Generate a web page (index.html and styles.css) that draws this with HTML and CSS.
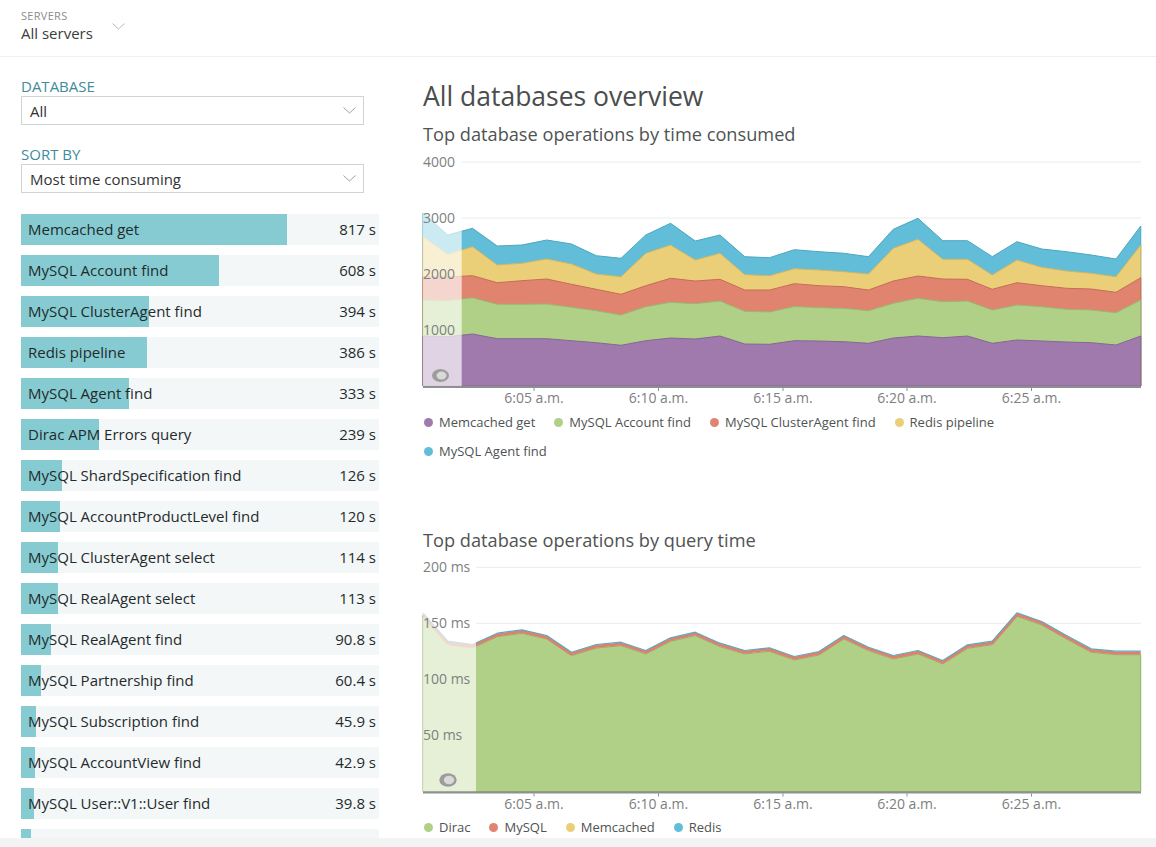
FILE: index.html
```html
<!DOCTYPE html>
<html lang="en">
<head>
<meta charset="utf-8">
<title>All databases overview</title>
<link rel="stylesheet" href="styles.css">
</head>
<body>
<div class="page">
  <header class="header">
    <div class="server-picker">
      <div class="picker-text">
        <div class="picker-label">SERVERS</div>
        <div class="picker-value">All servers</div>
      </div>
      <svg class="picker-chevron" width="13" height="7" viewBox="0 0 13 7"><path d="M0.5 0.5 L6.5 6 L12.5 0.5" fill="none" stroke="#b8bcbc" stroke-width="1"/></svg>
    </div>
  </header>

  <main class="main">
    <aside class="sidebar">
      <div class="field-label">DATABASE</div>
      <div class="select">
        <span>All</span>
        <svg width="13" height="7" viewBox="0 0 13 7"><path d="M0.5 0.5 L6.5 6 L12.5 0.5" fill="none" stroke="#9aa0a0" stroke-width="1"/></svg>
      </div>
      <div class="field-label">SORT BY</div>
      <div class="select">
        <span>Most time consuming</span>
        <svg width="13" height="7" viewBox="0 0 13 7"><path d="M0.5 0.5 L6.5 6 L12.5 0.5" fill="none" stroke="#9aa0a0" stroke-width="1"/></svg>
      </div>

      <ul class="ops">
        <li class="op" style="--w:266px"><span>Memcached get</span><span>817 s</span></li>
        <li class="op" style="--w:198px"><span>MySQL Account find</span><span>608 s</span></li>
        <li class="op" style="--w:128px"><span>MySQL ClusterAgent find</span><span>394 s</span></li>
        <li class="op" style="--w:126px"><span>Redis pipeline</span><span>386 s</span></li>
        <li class="op" style="--w:108px"><span>MySQL Agent find</span><span>333 s</span></li>
        <li class="op" style="--w:78px"><span>Dirac APM Errors query</span><span>239 s</span></li>
        <li class="op" style="--w:41px"><span>MySQL ShardSpecification find</span><span>126 s</span></li>
        <li class="op" style="--w:39px"><span>MySQL AccountProductLevel find</span><span>120 s</span></li>
        <li class="op" style="--w:37px"><span>MySQL ClusterAgent select</span><span>114 s</span></li>
        <li class="op" style="--w:37px"><span>MySQL RealAgent select</span><span>113 s</span></li>
        <li class="op" style="--w:30px"><span>MySQL RealAgent find</span><span>90.8 s</span></li>
        <li class="op" style="--w:20px"><span>MySQL Partnership find</span><span>60.4 s</span></li>
        <li class="op" style="--w:15px"><span>MySQL Subscription find</span><span>45.9 s</span></li>
        <li class="op" style="--w:14px"><span>MySQL AccountView find</span><span>42.9 s</span></li>
        <li class="op" style="--w:13px"><span>MySQL User::V1::User find</span><span>39.8 s</span></li>
        <li class="op" style="--w:10px"></li>
      </ul>
    </aside>

    <section class="content">
      <h1 class="title">All databases overview</h1>
      <h2 class="subtitle">Top database operations by time consumed</h2>
      <svg class="chart" width="718" height="262" viewBox="0 0 718 262">
        <g transform="translate(-423,-146)">
          <line class="grid" x1="462" y1="162" x2="1141" y2="162"/>
          <line class="grid" x1="462" y1="218" x2="1141" y2="218"/>
          <line class="grid" x1="462" y1="274" x2="1141" y2="274"/>
          <line class="grid" x1="462" y1="330" x2="1141" y2="330"/>
          <polygon class="a-blue" points="423,213 447.75,235 472.5,228.3 497.25,246 522,245 546.75,240 571.5,244 596.25,255.7 621,258.3 645.75,235 670.5,223.3 695.25,241 720,235 744.75,256.7 769.5,257.7 794.25,249.7 819,251.7 843.75,253.3 868.5,256.7 893.25,229.3 918,218.3 942.75,240.7 967.5,240.7 992.25,256.7 1017,241.7 1041.75,249 1066.5,251.7 1091.25,255 1116,259 1140.75,226 1140.75,386 423,386"/>
          <polygon class="a-yellow" points="423,236.7 447.75,254.3 472.5,246.7 497.25,265 522,263.3 546.75,259 571.5,264 596.25,274 621,276.7 645.75,253.3 670.5,245 695.25,260 720,253.3 744.75,274.7 769.5,275.7 794.25,268.7 819,270 843.75,271.7 868.5,274 893.25,248.3 918,239.3 942.75,259.3 967.5,259.3 992.25,275 1017,260 1041.75,267.3 1066.5,271 1091.25,273.3 1116,276.7 1140.75,245 1140.75,386 423,386"/>
          <polygon class="a-red" points="423,276.7 447.75,277 472.5,275.7 497.25,282.7 522,280.7 546.75,279 571.5,284.3 596.25,289.3 621,294.3 645.75,285.7 670.5,278.3 695.25,281 720,279.3 744.75,290 769.5,290 794.25,283.7 819,285.7 843.75,286.7 868.5,290 893.25,281 918,276 942.75,279 967.5,279.3 992.25,289.3 1017,282.7 1041.75,285.7 1066.5,288.3 1091.25,289 1116,292.3 1140.75,277.7 1140.75,386 423,386"/>
          <polygon class="a-green" points="423,300 447.75,300.7 472.5,297.7 497.25,304.3 522,304.3 546.75,304 571.5,307.3 596.25,310.7 621,315 645.75,306.7 670.5,302.3 695.25,303.7 720,301 744.75,311.3 769.5,312 794.25,306.5 819,307.7 843.75,308.3 868.5,310.7 893.25,303.3 918,298.3 942.75,301.7 967.5,301 992.25,310 1017,305 1041.75,306.7 1066.5,309.3 1091.25,310 1116,312.7 1140.75,300 1140.75,386 423,386"/>
          <polygon class="a-purple" points="423,336 447.75,336.7 472.5,334 497.25,338.7 522,338.7 546.75,338.7 571.5,340.7 596.25,342.7 621,345.3 645.75,340.7 670.5,338 695.25,339 720,336 744.75,344 769.5,344.3 794.25,340.7 819,341 843.75,341.7 868.5,343.3 893.25,338 918,336 942.75,337.7 967.5,336 992.25,343.3 1017,340 1041.75,341 1066.5,342 1091.25,342.7 1116,345 1140.75,336 1140.75,386 423,386"/>
          <rect class="brush" x="423" y="150" width="38.7" height="236"/>
          <ellipse cx="440.5" cy="375.5" rx="8.5" ry="6.5" fill="#9c9c9c"/>
          <ellipse cx="441.5" cy="375.5" rx="5" ry="4" fill="#d9d9d9"/>
          <rect class="axis" x="423" y="386" width="718" height="2"/>
          <rect class="tick" x="533.5" y="388" width="1" height="3"/>
          <rect class="tick" x="658" y="388" width="1" height="3"/>
          <rect class="tick" x="782.5" y="388" width="1" height="3"/>
          <rect class="tick" x="906.5" y="388" width="1" height="3"/>
          <rect class="tick" x="1031" y="388" width="1" height="3"/>
          <text class="ylabel" x="423" y="167">4000</text>
          <text class="ylabel" x="423" y="223">3000</text>
          <text class="ylabel" x="423" y="279">2000</text>
          <text class="ylabel" x="423" y="335">1000</text>
          <text class="xlabel" x="534" y="403">6:05 a.m.</text>
          <text class="xlabel" x="658.5" y="403">6:10 a.m.</text>
          <text class="xlabel" x="783" y="403">6:15 a.m.</text>
          <text class="xlabel" x="907" y="403">6:20 a.m.</text>
          <text class="xlabel" x="1031.5" y="403">6:25 a.m.</text>
        </g>
      </svg>
      <ul class="legend legend-wide">
        <li><i class="dot purple"></i>Memcached get</li>
        <li><i class="dot green"></i>MySQL Account find</li>
        <li><i class="dot red"></i>MySQL ClusterAgent find</li>
        <li><i class="dot yellow"></i>Redis pipeline</li>
        <li><i class="dot blue"></i>MySQL Agent find</li>
      </ul>

      <h2 class="subtitle second">Top database operations by query time</h2>
      <svg class="chart" width="718" height="261" viewBox="0 0 718 261">
        <g transform="translate(-423,-552)">
          <line class="grid" x1="476" y1="567.3" x2="1141" y2="567.3"/>
          <line class="grid" x1="476" y1="623.3" x2="1141" y2="623.3"/>
          <line class="grid" x1="476" y1="679.3" x2="1141" y2="679.3"/>
          <line class="grid" x1="476" y1="735.3" x2="1141" y2="735.3"/>
          <polygon class="a-green2" points="423,616.7 447.75,644.7 472.5,648 497.25,636.7 522,633.3 546.75,639 571.5,655.7 596.25,648 621,645.7 645.75,654 670.5,641.3 695.25,635.7 720,646.7 744.75,654 769.5,651.3 794.25,660 819,655 843.75,639 868.5,650.7 893.25,659 918,654 942.75,664 967.5,648.3 992.25,644.7 1017,616.3 1041.75,625 1066.5,639 1091.25,652.3 1116,654.7 1140.75,654.7 1140.75,791.5 423,791.5"/>
          <polyline class="l-red" points="423,614.9 447.75,642.9 472.5,646.2 497.25,634.9 522,631.5 546.75,637.2 571.5,653.9 596.25,646.2 621,643.9 645.75,652.2 670.5,639.5 695.25,633.9 720,644.9 744.75,652.2 769.5,649.5 794.25,658.2 819,653.2 843.75,637.2 868.5,648.9 893.25,657.2 918,652.2 942.75,662.2 967.5,646.5 992.25,642.9 1017,614.5 1041.75,623.2 1066.5,637.2 1091.25,650.5 1116,652.9 1140.75,652.9"/>
          <polyline class="l-blue" points="423,613.2 447.75,641.2 472.5,644.5 497.25,633.2 522,629.8 546.75,635.5 571.5,652.2 596.25,644.5 621,642.2 645.75,650.5 670.5,637.8 695.25,632.2 720,643.2 744.75,650.5 769.5,647.8 794.25,656.5 819,651.5 843.75,635.5 868.5,647.2 893.25,655.5 918,650.5 942.75,660.5 967.5,644.8 992.25,641.2 1017,612.8 1041.75,621.5 1066.5,635.5 1091.25,648.8 1116,651.2 1140.75,651.2"/>
          <rect class="brush" x="423" y="560" width="53" height="231.5"/>
          <ellipse cx="448" cy="780" rx="8.7" ry="6.7" fill="#9c9c9c"/>
          <ellipse cx="449" cy="780" rx="5.2" ry="4.2" fill="#d9d9d9"/>
          <rect class="axis" x="423" y="791.5" width="718" height="2"/>
          <rect class="tick" x="533.5" y="793.5" width="1" height="3"/>
          <rect class="tick" x="658" y="793.5" width="1" height="3"/>
          <rect class="tick" x="782.5" y="793.5" width="1" height="3"/>
          <rect class="tick" x="906.5" y="793.5" width="1" height="3"/>
          <rect class="tick" x="1031" y="793.5" width="1" height="3"/>
          <text class="ylabel" x="423" y="572.3">200 ms</text>
          <text class="ylabel" x="423" y="628.3">150 ms</text>
          <text class="ylabel" x="423" y="684.3">100 ms</text>
          <text class="ylabel" x="423" y="740.3">50 ms</text>
          <text class="xlabel" x="534" y="809">6:05 a.m.</text>
          <text class="xlabel" x="658.5" y="809">6:10 a.m.</text>
          <text class="xlabel" x="783" y="809">6:15 a.m.</text>
          <text class="xlabel" x="907" y="809">6:20 a.m.</text>
          <text class="xlabel" x="1031.5" y="809">6:25 a.m.</text>
        </g>
      </svg>
      <ul class="legend">
        <li><i class="dot green"></i>Dirac</li>
        <li><i class="dot red"></i>MySQL</li>
        <li><i class="dot yellow"></i>Memcached</li>
        <li><i class="dot blue"></i>Redis</li>
      </ul>
    </section>
  </main>

  <footer class="footer"></footer>
</div>
</body>
</html>
```

FILE: styles.css
```css
* { box-sizing: border-box; }

html, body {
  margin: 0;
  padding: 0;
  height: 100%;
  overflow: hidden;
  background: #ffffff;
  font-family: "Open Sans", "Noto Sans", "Liberation Sans", sans-serif;
  color: #333;
}

.page {
  display: flex;
  flex-direction: column;
  height: 100vh;
}

/* Header */
.header {
  flex: none;
  height: 57px;
  border-bottom: 1px solid #eef0f0;
  padding: 9px 0 0 21px;
}

.server-picker {
  display: flex;
  align-items: flex-start;
}

.picker-label {
  font-size: 11px;
  line-height: 14px;
  letter-spacing: 0.3px;
  color: #8a8d8d;
}

.picker-value {
  font-size: 15px;
  line-height: 20px;
  color: #3a3d3d;
}

.picker-chevron {
  margin: 14px 0 0 19px;
}

/* Main */
.main {
  flex: 1;
  display: flex;
  gap: 44px;
  padding: 0 15px 0 21px;
  overflow: hidden;
  min-height: 0;
}

.sidebar {
  flex: none;
  width: 358px;
  padding-top: 19px;
}

.field-label {
  font-size: 15px;
  line-height: 20px;
  color: #3e8b9b;
}

.select {
  width: 343px;
  height: 29px;
  border: 1px solid #cfd3d3;
  background: #fff;
  display: flex;
  align-items: center;
  justify-content: space-between;
  padding: 0 7px 0 8px;
  font-size: 15px;
  color: #333;
  margin-bottom: 19px;
}

.ops {
  list-style: none;
  margin: 21px 0 0;
  padding: 0;
}

.op {
  height: 31px;
  margin-bottom: 10px;
  display: flex;
  justify-content: space-between;
  align-items: center;
  padding: 0 3px 0 7px;
  font-size: 15px;
  line-height: 31px;
  color: #1f2b2d;
  background: linear-gradient(to right, #86cbd1 0, #86cbd1 var(--w), #f4f7f7 var(--w), #f4f7f7 100%);
  white-space: nowrap;
}

/* Content */
.content {
  flex: 1;
  min-width: 0;
  padding-top: 23px;
}

.title {
  margin: 0 0 10px;
  font-size: 26.5px;
  line-height: 32px;
  font-weight: 400;
  color: #4a4d4d;
}

.subtitle {
  margin: 0;
  font-size: 18.2px;
  line-height: 24px;
  font-weight: 400;
  color: #4f5353;
}

.subtitle.second {
  margin-top: 62px;
}

.chart {
  display: block;
  overflow: visible;
}

.grid { stroke: #ececec; stroke-width: 1; }

.a-blue   { fill: #62bed8; stroke: #4aa6c0; stroke-width: 1; }
.a-yellow { fill: #ebcf78; stroke: #d2b661; stroke-width: 1; }
.a-red    { fill: #e1846f; stroke: #c66c59; stroke-width: 1; }
.a-green  { fill: #b0d087; stroke: #97b970; stroke-width: 1; }
.a-purple { fill: #a07aad; stroke: #876596; stroke-width: 1; }

.a-green2 { fill: #b0d087; stroke: #8fb06a; stroke-width: 1; }
.l-red  { fill: none; stroke: #e0806a; stroke-width: 3; stroke-linejoin: round; }
.l-blue { fill: none; stroke: #5ba9c2; stroke-width: 1.2; stroke-linejoin: round; }

.brush { fill: #ffffff; opacity: 0.67; }

.axis { fill: #8d9090; }
.tick { fill: #8d9090; }

.ylabel, .xlabel {
  font-family: "Open Sans", "Noto Sans", sans-serif;
  font-size: 14px;
  fill: #7d8080;
}

.xlabel { text-anchor: middle; }

.legend {
  list-style: none;
  margin: 0;
  padding: 0 0 0 1px;
  display: flex;
  flex-wrap: wrap;
  column-gap: 19px;
  max-width: 620px;
  font-size: 13px;
  line-height: 29px;
  color: #4f5353;
}

.legend li {
  display: flex;
  align-items: center;
}

.dot {
  display: inline-block;
  width: 9px;
  height: 9px;
  border-radius: 50%;
  margin-right: 6px;
}

.dot.purple { background: #a07aad; }
.dot.green  { background: #b0d087; }
.dot.red    { background: #e1846f; }
.dot.yellow { background: #ebcf78; }
.dot.blue   { background: #62bed8; }

.footer {
  flex: none;
  height: 9px;
  background: #f2f3f3;
}
```
